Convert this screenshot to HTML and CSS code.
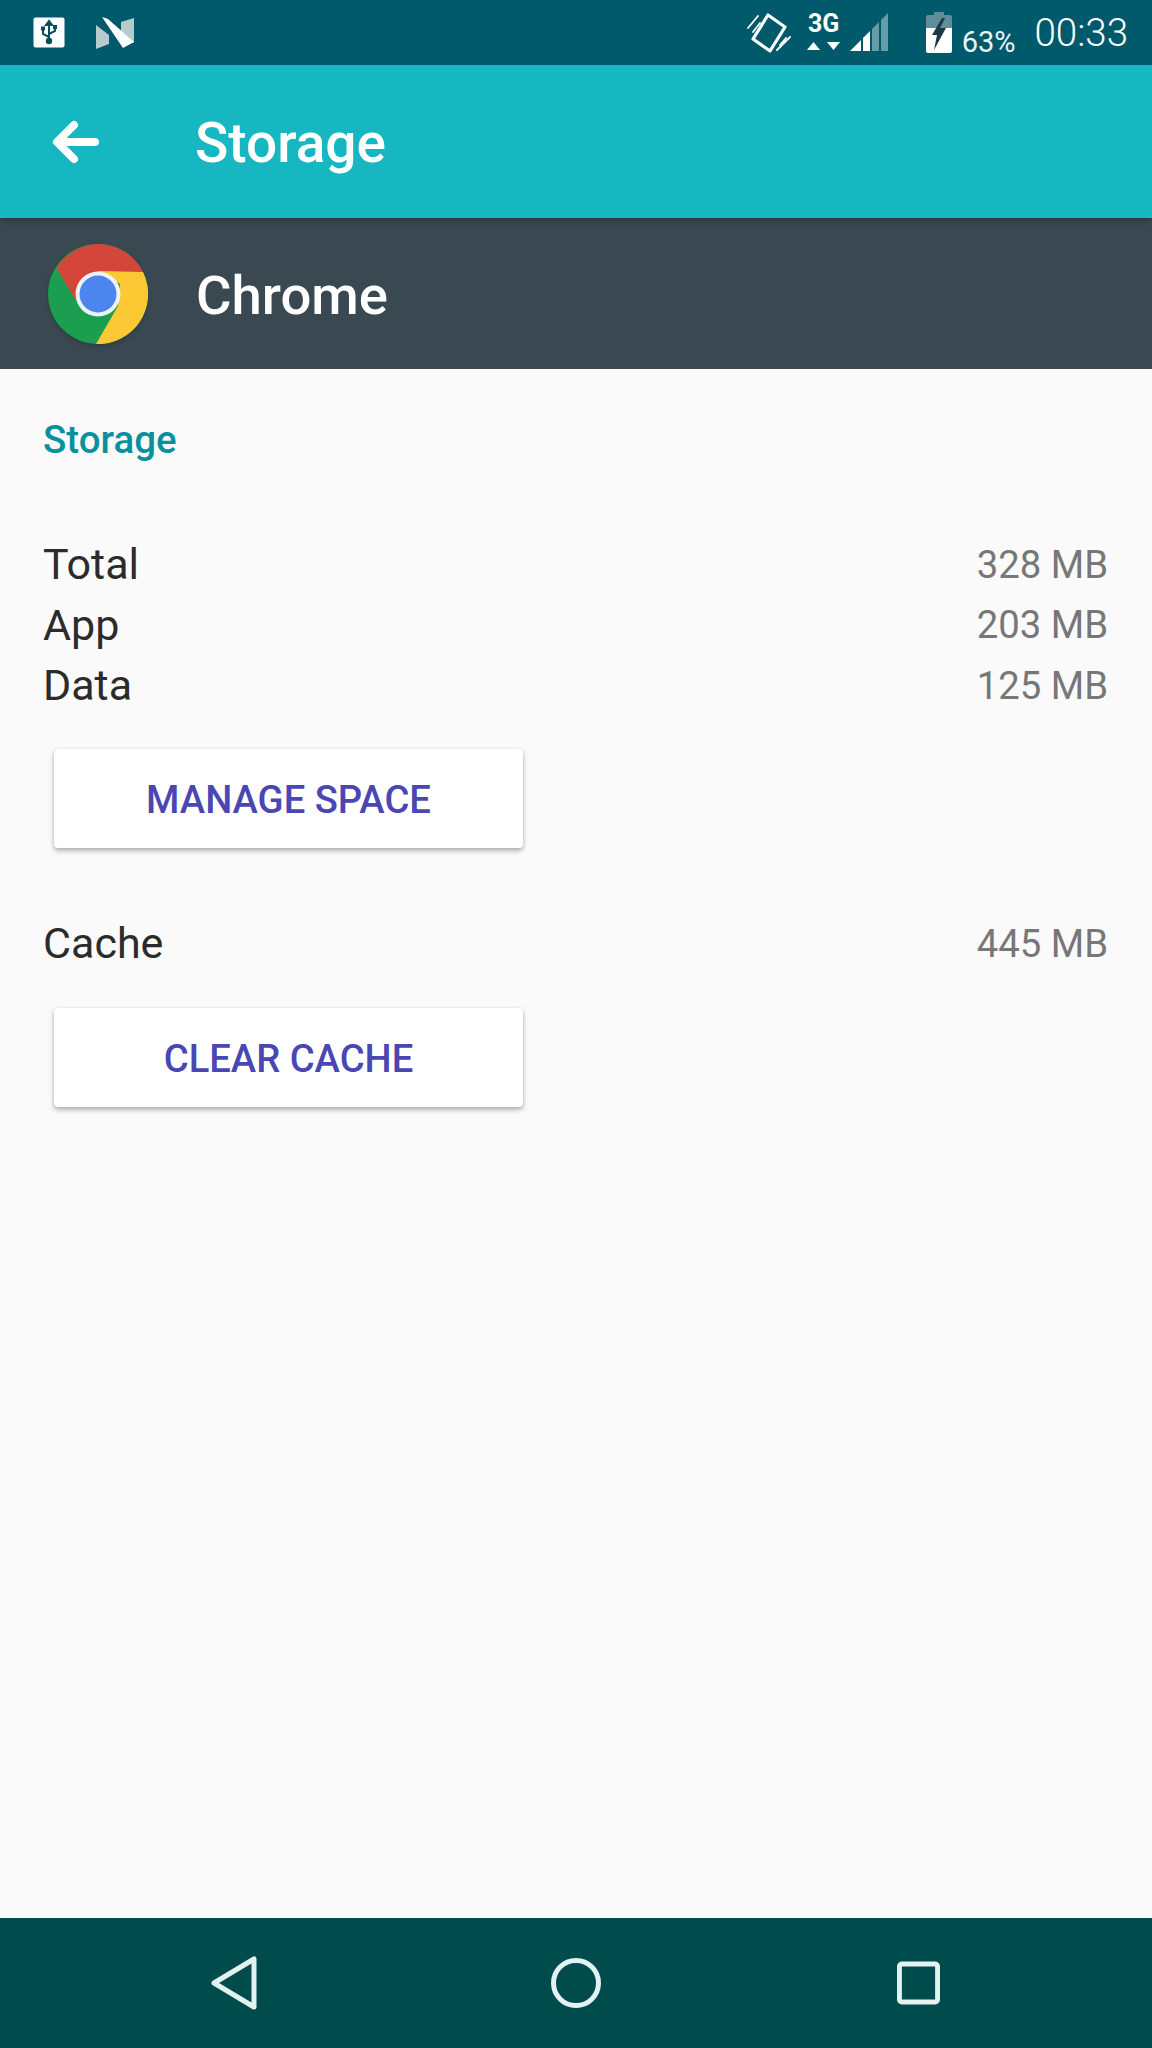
FILE: index.html
```html
<!DOCTYPE html>
<html lang="en">
<head>
<meta charset="utf-8">
<title>Storage</title>
<link rel="stylesheet" href="styles.css">
</head>
<body>
<div class="page">
  <header class="status">
    <div class="status-left">
      <svg class="ic-usb" viewBox="0 0 32 32"><rect x="0.5" y="0.5" width="31" height="30" rx="2" fill="#fff"/><path d="M16 4v21M16 4l-3 4h6zM16 20l-6-3v-4M16 17l6-3v-3" fill="none" stroke="#01505f" stroke-width="2"/><circle cx="16" cy="24" r="3.2" fill="#01505f"/><rect x="8" y="9.500" width="4" height="4" fill="#01505f"/><rect x="20" y="8" width="4" height="4" fill="#01505f"/></svg>
      <svg class="ic-n" viewBox="0 0 39 32"><path d="M0 8 L13 18 V27 L0 32Z" fill="#b7cbcd"/><path d="M38 1 V26 L25 14 V5Z" fill="#b7cbcd"/><path d="M6 0 L12 2 L38 25 L27 31 Z" fill="#fff"/></svg>
    </div>
    <div class="status-right">
      <svg class="ic-rotate" viewBox="0 0 44 42"><g fill="none" stroke="#fff" stroke-linecap="round" stroke-linejoin="round"><path d="M21 3L38 15L23 39L6 27Z" stroke-width="3.200"/><path d="M1 16L11 4M6 20L13 11M43 25L30 38M39 26L33 33" stroke-width="1.800"/></g></svg>
      <div class="net">
        <span class="net-label">3G</span>
        <svg class="ic-arrows" viewBox="0 0 34 9"><path d="M0 9L6.500 1L13 9Z M20 1H33L26.500 9Z" fill="#fff"/></svg>
      </div>
      <svg class="ic-signal" viewBox="0 0 39 39"><path d="M0 38L11 27V38Z M13 25L20 18V38H13Z" fill="#fff"/><path d="M22 16L29 9V38H22Z M31 7L38 0V38H31Z" fill="#fff" opacity=".4"/></svg>
      <svg class="ic-battery" viewBox="0 0 26 42"><path d="M8 0H18V3H24Q26 3 26 5V16H0V5Q0 3 2 3H8Z" fill="#5f8d98"/><path d="M0 16H26V39Q26 41 24 41H2Q0 41 0 39Z" fill="#fff"/><path d="M16 6L6 23H11L8 38L20 16H14L19 6Z" fill="#1c3a44"/></svg>
      <span class="pct">63%</span>
      <span class="clock">00:33</span>
    </div>
  </header>
  <div class="appbar">
    <svg class="ic-back" viewBox="0 0 48 44"><path d="M43 22H6M22 5L5 22L22 39" fill="none" stroke="#fff" stroke-width="8" stroke-linecap="round" stroke-linejoin="round"/></svg>
    <span class="appbar-title">Storage</span>
  </div>
  <div class="apphead">
    <svg class="ic-chrome" viewBox="0 0 100 100">
      <circle cx="50" cy="50" r="50" fill="#1b9e4f"/>
      <path d="M50 0A50 50 0 0 1 95 28L50 27L28 57L8.500 24A50 50 0 0 1 50 0Z" fill="#d5463a"/>
      <path d="M95 28A50 50 0 0 1 48 100L70 62L72 40L50 27Z" fill="#fcc934"/>
      <circle cx="50" cy="50" r="22.500" fill="#eef2f7"/>
      <circle cx="50" cy="50" r="18.500" fill="#4c85ee"/>
    </svg>
    <span class="apphead-title">Chrome</span>
  </div>
  <main class="content">
    <h2 class="section">Storage</h2>
    <div class="rows">
      <div class="row"><span class="label">Total</span><span class="value">328 MB</span></div>
      <div class="row"><span class="label">App</span><span class="value">203 MB</span></div>
      <div class="row"><span class="label">Data</span><span class="value">125 MB</span></div>
    </div>
    <button class="btn btn-manage">MANAGE SPACE</button>
    <div class="row row-cache"><span class="label">Cache</span><span class="value">445 MB</span></div>
    <button class="btn btn-clear">CLEAR CACHE</button>
  </main>
  <nav class="navbar">
    <svg class="ic-nav-back" viewBox="0 0 46 54"><path d="M43 3V51L3 27Z" fill="none" stroke="#e4f2f2" stroke-width="5" stroke-linejoin="round"/></svg>
    <svg class="ic-nav-home" viewBox="0 0 50 50"><circle cx="25" cy="25" r="22.500" fill="none" stroke="#e4f2f2" stroke-width="5"/></svg>
    <svg class="ic-nav-recent" viewBox="0 0 44 44"><rect x="2.500" y="2.500" width="39" height="39" rx="2.500" fill="none" stroke="#e4f2f2" stroke-width="5"/></svg>
  </nav>
</div>
</body>
</html>
```
FILE: styles.css
```css
* { box-sizing: border-box; }
html, body { margin: 0; padding: 0; }
body { font-family: Roboto, "Liberation Sans", sans-serif; background: #fafafa; }
.page { height: 2048px; width: 1152px; display: flex; flex-direction: column; overflow: hidden; }

.status { height: 65px; background: #015a6b; display: flex; justify-content: space-between; align-items: flex-start; flex: none; }
.status-left { display: flex; align-items: center; gap: 31px; padding: 17px 0 0 33px; }
.ic-usb { width: 32px; height: 32px; display: block; }
.ic-n { width: 39px; height: 32px; display: block; }
.status-right { display: flex; align-items: flex-start; padding-right: 24px; color: #fff; }
.ic-rotate { width: 44px; height: 42px; margin: 12px 15px 0 0; display: block; flex: none; }
.net { width: 36px; margin-right: 8px; display: flex; flex-direction: column; align-items: center; padding-top: 11px; flex: none; }
.net-label { font-size: 25px; line-height: 26px; font-weight: 700; }
.ic-arrows { width: 34px; height: 9px; margin-top: 4px; display: block; }
.ic-signal { width: 39px; height: 39px; margin: 13px 37px 0 0; display: block; flex: none; }
.ic-battery { width: 26px; height: 42px; margin: 12px 10px 0 0; display: block; flex: none; }
.pct { font-size: 29px; line-height: 30px; margin: 27px 19px 0 0; color: #e8f4f5; }
.clock { font-size: 38.500px; line-height: 40px; margin-top: 13px; font-weight: 300; color: #fff; }

.appbar { height: 153px; background: #16b7c1; display: flex; align-items: center; flex: none; padding-left: 52px; position: relative; box-shadow: 0 3px 6px rgba(0,0,0,.25); }
.ic-back { width: 48px; height: 44px; display: block; margin-right: 95px; }
.appbar-title { font-size: 55px; line-height: 64px; padding-top: 2px; font-weight: 500; color: #fff; }

.apphead { height: 151px; background: #3a4951; display: flex; align-items: center; flex: none; padding-left: 48px; }
.ic-chrome { width: 100px; height: 100px; display: block; margin-right: 48px; filter: drop-shadow(0 2px 2px rgba(0,0,0,.2)); }
.apphead-title { font-size: 54.500px; line-height: 64px; padding-top: 3px; font-weight: 500; color: #fff; }

.content { flex: 1; padding: 47px 44px 0 43px; }
.section { margin: 0; font-size: 38.500px; line-height: 48px; font-weight: 500; color: #07919f; }
.rows { margin-top: 70px; }
.row { display: flex; justify-content: space-between; align-items: center; height: 60.5px; }
.label { font-size: 43px; color: #2b2b2b; }
.value { font-size: 38.300px; color: #777; }
.btn { display: block; width: 469px; height: 99px; margin: 33.5px 0 0 11px; border: 0; border-radius: 4px; background: #fff; color: #4a47b3; font-family: inherit; font-size: 38.200px; font-weight: 500; box-shadow: 0 3px 5px rgba(0,0,0,.28), 0 0 3px rgba(0,0,0,.1); padding: 2px 0 0; }
.row-cache { margin-top: 65px; }
.btn-clear { margin-top: 34.5px; }

.navbar { height: 130px; background: #004c4c; flex: none; display: flex; align-items: center; position: relative; padding-left: 211px; }
.ic-nav-back { width: 46px; height: 54px; display: block; margin-right: 294px; }
.ic-nav-home { width: 50px; height: 50px; display: block; margin-right: 296px; }
.ic-nav-recent { width: 43px; height: 44px; display: block; }
```
